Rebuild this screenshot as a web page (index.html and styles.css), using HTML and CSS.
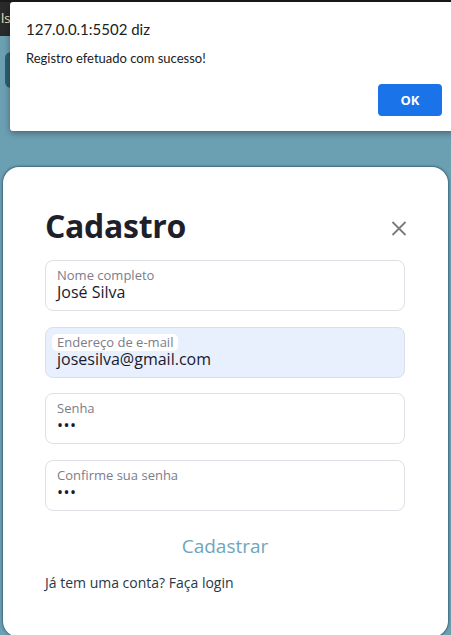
FILE: index.html
```html
<!DOCTYPE html>
<html lang="pt-BR">
<head>
<meta charset="utf-8">
<title>Cadastro</title>
<link rel="stylesheet" href="styles.css">
</head>
<body>
  <header class="topbar"><span class="topbar-text">ls</span></header>
  <div class="page">
    <div class="nav-btn"></div>
    <main class="card">
      <div class="card-head">
        <h1 class="title">Cadastro</h1>
        <button class="close" aria-label="Fechar">
          <svg width="16" height="16" viewBox="0 0 16 16"><path d="M1.5 1 L14.5 14 M14.5 1 L1.5 14" stroke="#7a7a7a" stroke-width="1.8" fill="none"/></svg>
        </button>
      </div>
      <form class="form">
        <div class="field">
          <span class="label">Nome completo</span>
          <span class="value">José Silva</span>
        </div>
        <div class="field field-autofill">
          <span class="label">Endereço de e-mail</span>
          <span class="value">josesilva@gmail.com</span>
        </div>
        <div class="field">
          <span class="label">Senha</span>
          <span class="value dots">•••</span>
        </div>
        <div class="field">
          <span class="label">Confirme sua senha</span>
          <span class="value dots">•••</span>
        </div>
        <button type="button" class="submit">Cadastrar</button>
        <p class="login">Já tem uma conta? Faça login</p>
      </form>
    </main>
  </div>

  <div class="alert">
    <div class="alert-title">127.0.0.1:5502 diz</div>
    <div class="alert-msg">Registro efetuado com sucesso!</div>
    <div class="alert-actions"><button class="alert-ok">OK</button></div>
  </div>
</body>
</html>
```
FILE: styles.css
```css
html, body {
  margin: 0;
  padding: 0;
  overflow: hidden;
  height: 100%;
}
body {
  background: #6b9fb2;
  font-family: "Open Sans", "Noto Sans", sans-serif;
  position: relative;
}
.topbar {
  height: 36px;
  background: #2a2a2a;
  border-top: 2px solid #1a1a1a;
  box-sizing: border-box;
  padding-left: 1px;
}
.topbar-text {
  font-family: "Open Sans", sans-serif;
  font-size: 13px;
  line-height: 32px;
  color: #efe6c9;
}
.page {
  display: flex;
  flex-direction: column;
}
.nav-btn {
  margin: 16px 0 0 5px;
  width: 40px;
  height: 36px;
  border-radius: 6px;
  background: #2c5e6f;
}
.card {
  margin: 79px 0 0 3px;
  width: 445px;
  height: 470px;
  box-sizing: border-box;
  background: #ffffff;
  border-radius: 16px;
  box-shadow: 0 0 2px 1px rgba(30, 60, 75, 0.55);
  padding: 43px 43px 0 42px;
}
.card-head {
  display: flex;
  justify-content: space-between;
  align-items: flex-start;
  height: 32px;
}
.title {
  margin: 0;
  font-size: 32px;
  line-height: 32px;
  font-weight: 700;
  color: #1e1f2a;
  letter-spacing: -0.3px;
}
.close {
  margin: 11px -2px 0 0;
  padding: 0;
  border: none;
  background: none;
  width: 16px;
  height: 16px;
  display: flex;
}
.form {
  margin-top: 18px;
  display: flex;
  flex-direction: column;
  gap: 15.5px;
}
.field {
  height: 51px;
  box-sizing: border-box;
  border: 1px solid #dfe0e6;
  border-radius: 8px;
  padding: 6px 11px 0;
  display: flex;
  flex-direction: column;
  align-items: flex-start;
}
.field-autofill {
  background: #e8f0fe;
  border-color: #d9e0ea;
}
.label {
  margin-left: -5px;
  padding: 0 5px;
  line-height: 17px;
  font-size: 13px;
  color: #7c7c8a;
  border-radius: 5px;
}
.field-autofill .label {
  background: #ffffff;
}
.value {
  line-height: 16px;
  font-size: 16px;
  color: #1a1a2c;
}
.dots {
  font-size: 16px;
  letter-spacing: 0.5px;
}
.submit {
  align-self: center;
  margin-top: 7.5px;
  padding: 0;
  border: none;
  background: none;
  font-family: inherit;
  font-size: 19px;
  line-height: 24px;
  color: #6ea6bb;
}
.login {
  margin: 0;
  font-size: 14px;
  line-height: 20px;
  color: #283848;
}
.alert {
  position: absolute;
  top: 2px;
  left: 10px;
  width: 451px;
  height: 129px;
  box-sizing: border-box;
  padding: 17px 19px 0 16px;
  background: #ffffff;
  border-radius: 3px;
  box-shadow: 0 2px 6px rgba(0, 0, 0, 0.35);
  font-family: Lato, "Open Sans", sans-serif;
  display: flex;
  flex-direction: column;
  align-items: flex-start;
}
.alert-title {
  font-size: 15px;
  line-height: 20px;
  color: #202124;
}
.alert-msg {
  margin-top: 10px;
  font-size: 13px;
  line-height: 18px;
  color: #202124;
}
.alert-actions {
  margin-top: 17px;
  align-self: stretch;
  display: flex;
  justify-content: flex-end;
}
.alert-ok {
  width: 64px;
  height: 32px;
  border: none;
  border-radius: 4px;
  background: #1a73e8;
  color: #ffffff;
  font-family: "Open Sans", sans-serif;
  font-weight: 700;
  font-size: 13px;
}
```
